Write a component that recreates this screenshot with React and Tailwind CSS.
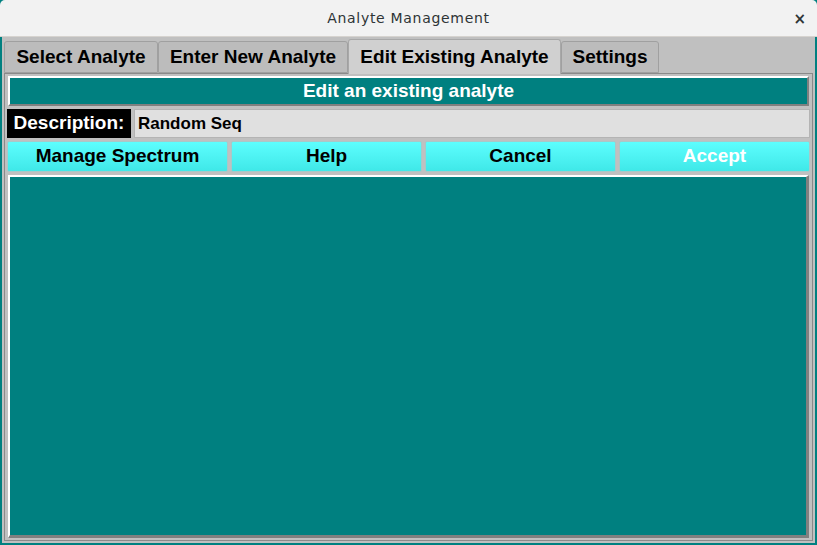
export default function App() {
  const tabs = [
    { label: "Select Analyte", w: "w-[154px]" },
    { label: "Enter New Analyte", w: "w-[190px]" },
    { label: "Edit Existing Analyte", w: "w-[213px]" },
    { label: "Settings", w: "w-[98px]" },
  ];
  const active = 2;
  const font = { fontFamily: '"Liberation Sans", Arial, sans-serif' };

  return (
    <div className="w-[817px] h-[545px] bg-[#008080] flex flex-col overflow-hidden" style={font}>
      {/* title bar */}
      <div className="h-[37px] shrink-0 bg-[#f2f2f2] rounded-t-[5px] border-b border-[#d6d3cf] flex items-center justify-center relative">
        <span className="text-[14px] tracking-[0.7px] text-[#2e3436]" style={{ fontFamily: '"DejaVu Sans", sans-serif' }}>
          Analyte Management
        </span>
        <span className="absolute right-[11px] top-[8px] text-[15px] font-bold text-[#2e3436]" style={{ fontFamily: '"DejaVu Sans", sans-serif' }}>
          ×
        </span>
      </div>

      {/* window body */}
      <div className="flex-1 mx-[2px] mb-[2px] bg-[#c0c0c0] flex flex-col px-[2px] pt-[1px] pb-[2px]">
        {/* tabs */}
        <div className="flex items-end h-[35px] shrink-0">
          {tabs.map((t, i) =>
            i === active ? (
              <div
                key={t.label}
                className={`${t.w} h-[35px] bg-[#d0d0d0] border border-b-0 border-[#a8a8a8] rounded-t-[3px] flex items-center justify-center text-[19px] font-bold text-black -mb-[1px] relative z-10`}
              >
                {t.label}
              </div>
            ) : (
              <div
                key={t.label}
                className={`${t.w} h-[32px] bg-[#bcbcbc] border border-[#a0a0a0] rounded-t-[3px] flex items-center justify-center text-[19px] font-bold text-black`}
              >
                {t.label}
              </div>
            )
          )}
        </div>

        {/* panel */}
        <div className="flex-1 border border-[#8a8a8a] bg-[#c0c0c0] flex flex-col gap-[3px] px-[2px] pt-[2px] pb-[2px]">
          <div className="h-[30px] shrink-0 mx-[1px] bg-[#008080] border-t-2 border-l-2 border-t-white border-l-white border-b-2 border-r-2 border-b-[#808080] border-r-[#808080] flex items-center justify-center text-white text-[19px] font-bold">
            Edit an existing analyte
          </div>

          <div className="h-[29px] shrink-0 flex gap-[3px]">
            <div className="w-[124px] bg-black text-white text-[19px] font-bold flex items-center justify-center">
              Description:
            </div>
            <div className="flex-1 bg-[#e0e0e0] border border-[#b4b4b4] flex items-center px-[3px] text-[17px] font-bold text-black">
              Random Seq
            </div>
          </div>

          <div className="h-[31px] shrink-0 grid grid-cols-[221px_1fr_1fr_1fr] gap-[3px]">
            {["Manage Spectrum", "Help", "Cancel", "Accept"].map((b) => (
              <div
                key={b}
                className={`bg-gradient-to-b from-[#5cfefe] to-[#3fe8e8] border border-[#a8c8c8] rounded-[2px] flex items-center justify-center text-[19px] font-bold ${
                  b === "Accept" ? "text-white" : "text-black"
                }`}
              >
                {b}
              </div>
            ))}
          </div>

          <div className="flex-1 mx-[1px] bg-[#008080] border-t-2 border-l-2 border-t-white border-l-white border-b-[3px] border-r-[3px] border-b-[#808080] border-r-[#808080]" />
        </div>
      </div>
    </div>
  );
}
